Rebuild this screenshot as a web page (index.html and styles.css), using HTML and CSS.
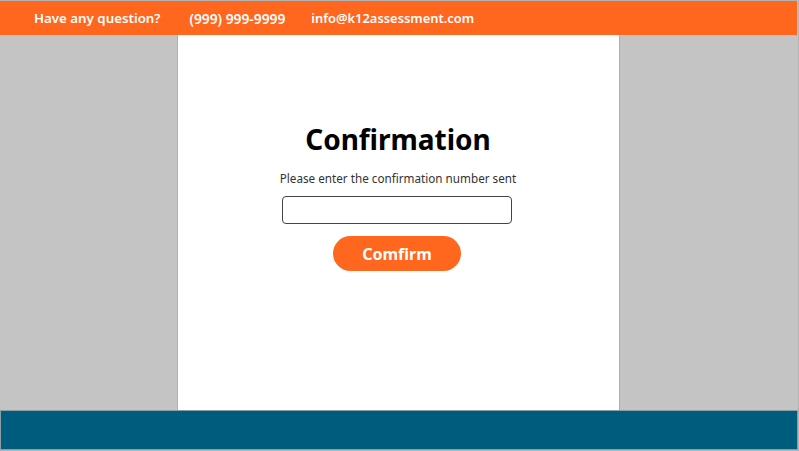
FILE: index.html
```html
<!DOCTYPE html>
<html>
<head>
<meta charset="utf-8">
<link rel="stylesheet" href="styles.css">
</head>
<body>
<div class="frame">
  <header class="topbar">
    <span class="q">Have any question?</span>
    <span class="phone">(999) 999-9999</span>
    <span class="mail">info@k12assessment.com</span>
  </header>
  <main class="main">
    <section class="panel">
      <h1 class="title">Confirmation</h1>
      <p class="hint">Please enter the confirmation number sent</p>
      <input class="code" type="text">
      <button class="btn">Comfirm</button>
    </section>
  </main>
  <footer class="footer"></footer>
</div>
</body>
</html>
```
FILE: styles.css
```css
html, body { margin: 0; padding: 0; }
body {
  background: #c4c4c4;
  font-family: "Noto Sans", "Open Sans", sans-serif;
}
.frame {
  height: 451px;
  box-sizing: border-box;
  border-top: 1px solid #b4b4b4;
  border-right: 1px solid #b4b4b4;
  border-bottom: 1px solid #b4b4b4;
  display: flex;
  flex-direction: column;
}
.topbar {
  height: 34px;
  background: #ff671f;
  color: #fff;
  font-size: 13.3px;
  font-weight: 600;
  display: flex;
  align-items: center;
  padding-left: 34px;
  margin-right: 1px;
}
.topbar .q { margin-right: 29px; }
.topbar .phone { margin-right: 26px; font-size: 13.8px; }
.topbar .mail { font-size: 12.9px; }
.main {
  flex: 1;
  display: flex;
  justify-content: center;
}
.panel {
  width: 441px;
  margin-left: -2px;
  background: #fff;
  border-left: 1px solid #b0b0b0;
  border-right: 1px solid #b0b0b0;
  display: flex;
  flex-direction: column;
  align-items: center;
  padding-top: 86px;
}
.title {
  margin: 0;
  font-size: 28px;
  font-weight: 700;
  color: #000;
  line-height: 36px;
}
.hint {
  margin: 13px 0 0;
  font-size: 11.7px;
  color: #333;
  line-height: 16px;
}
.code {
  margin-top: 10px;
  width: 230px;
  height: 28px;
  box-sizing: border-box;
  border: 1px solid #444;
  border-radius: 4px;
  background: #fff;
  margin-left: -2px;
}
.btn {
  margin-top: 12px;
  margin-left: -2px;
  width: 128px;
  height: 35px;
  border: none;
  border-radius: 18px;
  background: #ff671f;
  color: #fff;
  font-family: "Noto Sans", sans-serif;
  font-size: 16px;
  font-weight: 700;
}
.footer {
  height: 38px;
  background: #005c7c;
  border: 1px solid #8a9ea6;
}
```
